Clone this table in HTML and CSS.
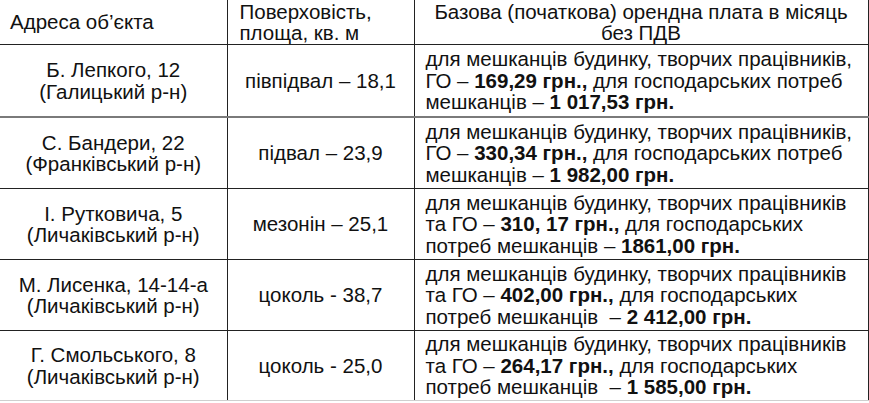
FILE: index.html
```html
<!DOCTYPE html>
<html lang="uk">
<head>
<meta charset="utf-8">
<link rel="stylesheet" href="styles.css">
</head>
<body>
<table class="rent">
  <colgroup>
    <col class="c-addr">
    <col class="c-area">
    <col class="c-rent">
  </colgroup>
  <tr class="head">
    <td class="h-addr">Адреса об’єкта</td>
    <td class="h-area">Поверховість,<br>площа, кв. м</td>
    <td class="h-rent">Базова (початкова) орендна плата в місяць<br>без ПДВ</td>
  </tr>
  <tr class="r1">
    <td class="addr">Б. Лепкого, 12<br>(Галицький р-н)</td>
    <td class="area">півпідвал – 18,1</td>
    <td class="rent-text">для мешканців будинку, творчих працівників,<br>ГО – <b>169,29 грн.,</b> для господарських потреб<br>мешканців – <b>1 017,53 грн.</b></td>
  </tr>
  <tr class="r2">
    <td class="addr">С. Бандери, 22<br>(Франківський р-н)</td>
    <td class="area">підвал – 23,9</td>
    <td class="rent-text">для мешканців будинку, творчих працівників,<br>ГО – <b>330,34 грн.,</b> для господарських потреб<br>мешканців – <b>1 982,00 грн.</b></td>
  </tr>
  <tr class="r3">
    <td class="addr">І. Рутковича, 5<br>(Личаківський р-н)</td>
    <td class="area">мезонін – 25,1</td>
    <td class="rent-text">для мешканців будинку, творчих працівників<br>та ГО – <b>310, 17 грн.,</b> для господарських<br>потреб мешканців – <b>1861,00 грн.</b></td>
  </tr>
  <tr class="r4">
    <td class="addr">М. Лисенка, 14-14-а<br>(Личаківський р-н)</td>
    <td class="area">цоколь - 38,7</td>
    <td class="rent-text">для мешканців будинку, творчих працівників<br>та ГО – <b>402,00 грн.,</b> для господарських<br>потреб мешканців&nbsp; – <b>2 412,00 грн.</b></td>
  </tr>
  <tr class="r5">
    <td class="addr">Г. Смольського, 8<br>(Личаківський р-н)</td>
    <td class="area">цоколь - 25,0</td>
    <td class="rent-text">для мешканців будинку, творчих працівників<br>та ГО – <b>264,17 грн.,</b> для господарських<br>потреб мешканців&nbsp; – <b>1 585,00 грн.</b></td>
  </tr>
</table>
</body>
</html>
```

FILE: styles.css
```css
html, body {
  margin: 0;
  padding: 0;
  background: #ffffff;
}

body {
  width: 869px;
  height: 403px;
  overflow: hidden;
  font-family: "Liberation Sans", Arial, sans-serif;
  font-size: 20.5px;
  color: #111111;
}

.rent {
  border-collapse: collapse;
  table-layout: fixed;
  width: 868px;
}

.c-addr { width: 227px; }
.c-area { width: 187px; }
.c-rent { width: 454px; }

.rent td {
  padding: 0;
  line-height: 21.5px;
  vertical-align: middle;
  border-left: 1px solid #222;
  border-right: 1px solid #222;
  border-bottom: 1px solid #222;
}

.rent td:first-child {
  border-left: none;
}

.head td {
  height: 44px;
}

.h-addr {
  text-align: left;
  padding-left: 10px !important;
}

.h-area {
  text-align: left;
  padding-left: 12px !important;
}

.h-rent {
  text-align: center;
}

.r1 td {
  height: 71px;
  border-bottom: 2px solid #7a7a7a;
}

.r2 td,
.r3 td,
.r4 td {
  height: 70px;
}

.r5 td {
  height: 69px;
  border-bottom: 1px solid #cfcfcf;
}

.addr,
.area {
  text-align: center;
}

.rent-text {
  text-align: left;
  padding-left: 11px !important;
  white-space: nowrap;
}

.rent-text b {
  font-weight: bold;
}
```
